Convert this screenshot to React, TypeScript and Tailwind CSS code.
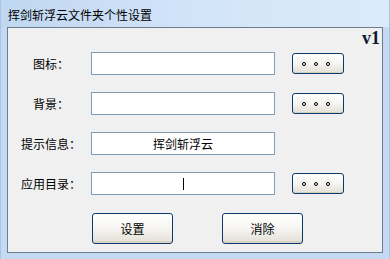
const cjk = { fontFamily: '"Noto Sans CJK SC", "Noto Sans", sans-serif' };

function DotButton() {
  return (
    <button className="w-[52px] h-[21px] rounded-[3px] border border-[#0a3a6e] bg-linear-to-b from-white via-[#f6f5f1] to-[#e2dfd6] flex items-center justify-center gap-[8px] pr-[4px] shadow-[inset_0_-1px_0_#d6d0c2]">
      <span className="w-[4px] h-[4px] rounded-full border border-black" />
      <span className="w-[4px] h-[4px] rounded-full border border-black" />
      <span className="w-[4px] h-[4px] rounded-full border border-black" />
    </button>
  );
}

function Row({ label, children, dots }: { label: string; children?: React.ReactNode; dots?: boolean }) {
  return (
    <div className="flex items-center h-[23px]">
      <div className="w-[80px] text-center text-[12px] text-black pl-[6px]">{label}</div>
      <div className="ml-[3px] w-[184px] h-[23px] border border-[#7f9db9] bg-white flex items-center justify-center text-[12px] text-black">
        {children}
      </div>
      {dots && (
        <div className="ml-[17px]">
          <DotButton />
        </div>
      )}
    </div>
  );
}

function BigButton({ text }: { text: string }) {
  return (
    <button className="w-[81px] h-[31px] rounded-[3px] border border-[#0a3a6e] bg-linear-to-b from-white via-[#f6f5f1] to-[#e2dfd6] text-[12px] text-black shadow-[inset_0_-2px_0_#d8d2c4]">
      {text}
    </button>
  );
}

export default function App() {
  return (
    <div
      className="w-[390px] h-[259px] flex flex-col bg-[#c4daf3] border-l border-r border-[#a9c4e4] overflow-hidden"
      style={cjk}
    >
      <div className="h-[27px] shrink-0 bg-linear-to-r from-[#c0d7f1] via-[#d2e4f8] to-[#dcebfb] flex items-center pl-[7px] pt-[3px] text-[12px] text-black">
        挥剑斩浮云文件夹个性设置
      </div>
      <div className="mx-[6px] h-[226px] border border-[#6f7c8e] bg-[#f0f0f0] relative">
        <div
          className="absolute right-[2px] top-[1px] text-[18px] leading-[18px] font-bold text-[#0b1b33]"
          style={{ fontFamily: '"Liberation Serif", serif' }}
        >
          v1
        </div>
        <div className="pt-[24px] flex flex-col gap-[17px]">
          <Row label="图标：" dots />
          <Row label="背景：" dots />
          <Row label="提示信息：">挥剑斩浮云</Row>
          <Row label="应用目录：" dots>
            <span className="w-px h-[12px] bg-black" />
          </Row>
        </div>
        <div className="flex mt-[18px] pl-[84px] gap-[49px]">
          <BigButton text="设置" />
          <BigButton text="消除" />
        </div>
      </div>
    </div>
  );
}
